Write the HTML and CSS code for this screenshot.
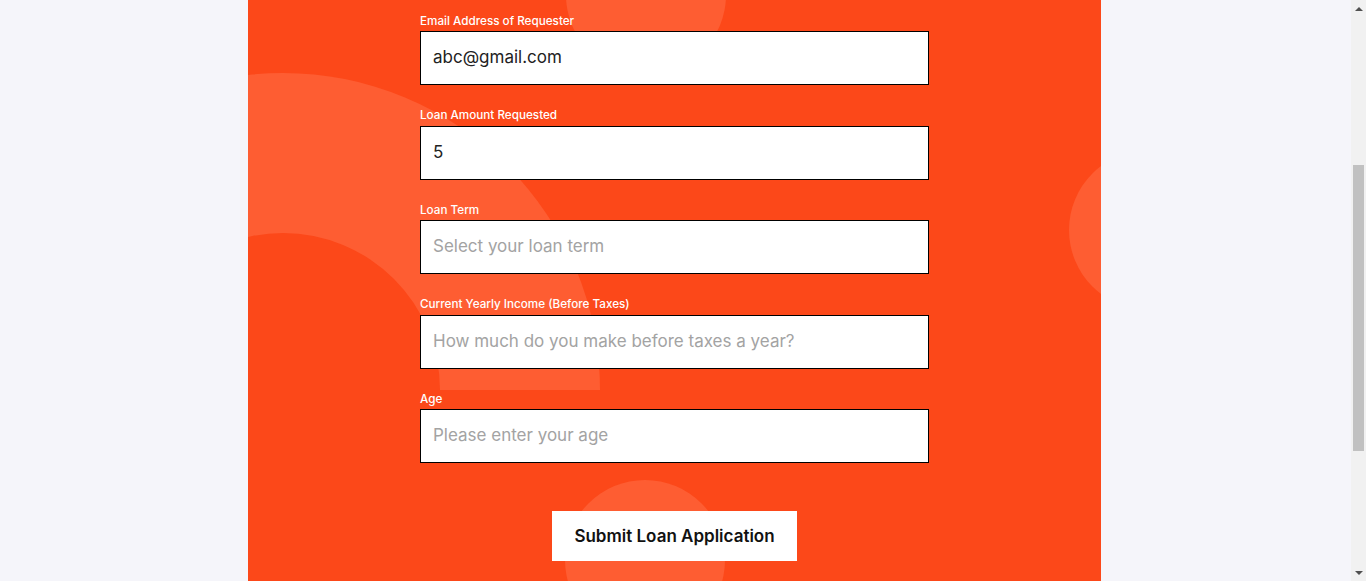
FILE: index.html
```html
<!DOCTYPE html>
<html lang="en">
<head>
<meta charset="utf-8">
<title>Loan Application</title>
<link rel="stylesheet" href="styles.css">
</head>
<body>
<div class="viewport">
  <main class="page">
    <section class="panel">
      <div class="deco ring"></div>
      <div class="deco dot dot-top"></div>
      <div class="deco dot dot-right"></div>
      <div class="deco dot dot-bottom"></div>
      <form class="loan-form">
        <div class="field">
          <label class="field-label">Email Address of Requester</label>
          <input class="field-input" type="text" value="abc@gmail.com">
        </div>
        <div class="field">
          <label class="field-label">Loan Amount Requested</label>
          <input class="field-input" type="text" value="5">
        </div>
        <div class="field">
          <label class="field-label">Loan Term</label>
          <input class="field-input" type="text" placeholder="Select your loan term">
        </div>
        <div class="field">
          <label class="field-label">Current Yearly Income (Before Taxes)</label>
          <input class="field-input" type="text" placeholder="How much do you make before taxes a year?">
        </div>
        <div class="field">
          <label class="field-label">Age</label>
          <input class="field-input" type="text" placeholder="Please enter your age">
        </div>
        <div class="actions">
          <button class="submit-btn" type="button">Submit Loan Application</button>
        </div>
      </form>
    </section>
  </main>
  <div class="scrollbar">
    <div class="sb-arrow sb-up"></div>
    <div class="sb-track"><div class="sb-thumb"></div></div>
    <div class="sb-arrow sb-down"></div>
  </div>
</div>
</body>
</html>
```

FILE: styles.css
```css
* { box-sizing: border-box; }

html, body {
  margin: 0;
  padding: 0;
  height: 581px;
  overflow: hidden;
  background: #f5f5fa;
  font-family: "Inter", "Open Sans", sans-serif;
}

.viewport {
  display: flex;
  height: 581px;
}

.page {
  flex: 1;
  display: flex;
  justify-content: center;
  padding-right: 2px;
}

.panel {
  position: relative;
  width: 853px;
  height: 581px;
  overflow: hidden;
  background: #fc4819;
}

.deco {
  position: absolute;
  background: #fe5d32;
}

.ring {
  left: -282px;
  top: 73px;
  width: 634px;
  height: 317px;
  background: transparent;
  border: 160px solid #fe5d32;
  border-bottom: 0;
  border-radius: 317px 317px 0 0;
}

.dot {
  width: 160px;
  height: 160px;
  border-radius: 50%;
}

.dot-top { left: 318px; top: -85px; }
.dot-right { left: 821px; top: 150px; }
.dot-bottom { left: 317px; top: 480px; }

.loan-form {
  position: relative;
  z-index: 1;
  width: 509px;
  margin: 0 auto;
  padding-top: 11.5px;
  display: flex;
  flex-direction: column;
  gap: 21px;
}

.field {
  display: flex;
  flex-direction: column;
  gap: 3px;
}

.field-label {
  color: #fff;
  font-size: 11.7px;
  line-height: 16.5px;
  font-weight: 500;
  padding-top: 1px;
  margin-bottom: -1px;
}

.field-input {
  height: 54px;
  width: 100%;
  border: 1px solid #000;
  background: #fff;
  padding: 0 12px 2px;
  font-family: inherit;
  font-size: 17px;
  color: #222;
  outline: none;
  border-radius: 0;
}

.field-input::placeholder {
  color: #a3a3a3;
}

.actions {
  display: flex;
  justify-content: center;
  padding-top: 27px;
}

.submit-btn {
  width: 245px;
  height: 50px;
  border: 0;
  background: #fff;
  color: #111;
  font-family: inherit;
  font-size: 17px;
  font-weight: 600;
  border-radius: 0;
}

.scrollbar {
  width: 15px;
  height: 581px;
  background: #f1f1f1;
  display: flex;
  flex-direction: column;
}

.sb-arrow {
  height: 17px;
  display: flex;
  align-items: center;
  justify-content: center;
}

.sb-up::before {
  content: "";
  border-left: 4px solid transparent;
  border-right: 4px solid transparent;
  border-bottom: 4px solid #505050;
}

.sb-down::before {
  content: "";
  border-left: 4px solid transparent;
  border-right: 4px solid transparent;
  border-top: 4px solid #505050;
}

.sb-track {
  flex: 1;
  padding: 148px 2px 0 2px;
}

.sb-thumb {
  height: 286px;
  background: #c1c1c1;
}
```
